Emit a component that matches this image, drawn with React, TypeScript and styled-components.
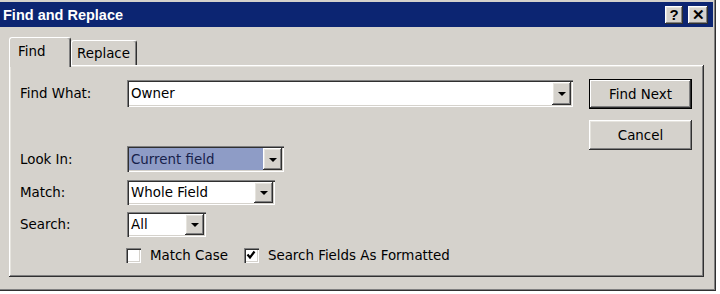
import styled, { createGlobalStyle } from "styled-components";

const GlobalStyle = createGlobalStyle`
  html, body {
    margin: 0;
    padding: 0;
    background: #fff;
  }
  body {
    font-family: "DejaVu Sans", Tahoma, sans-serif;
    font-size: 13.4px;
    color: #000;
  }
`;

const face = "#d5d2cc";

const raised = `
  background: ${face};
  box-shadow: inset -1px -1px 0 #303030, inset 1px 1px 0 #fff,
    inset -2px -2px 0 #808080, inset 2px 2px 0 #e6e4de;
`;

const sunken = `
  box-shadow: inset 1px 1px 0 #808080, inset 2px 2px 0 #303030,
    inset -1px -1px 0 #fff, inset -2px -2px 0 ${face};
`;

const Window = styled.div`
  width: 716px;
  height: 291px;
  box-sizing: border-box;
  background: ${face};
  padding: 2px 2px 0 0;
  border-right: 1px solid #303030;
  border-bottom: 1px solid #303030;
  box-shadow: inset -1px -1px 0 #808080;
  display: flex;
  flex-direction: column;
`;

const TitleBar = styled.div`
  height: 25px;
  background: #0c2572;
  display: flex;
  align-items: center;
  padding: 0 5px 0 3px;
  gap: 5px;
`;

const Title = styled.span`
  flex: 1;
  color: #fff;
  font-family: "Liberation Sans", Arial, sans-serif;
  font-weight: bold;
  font-size: 14.5px;
`;

const CaptionButton = styled.div<{ $w: number }>`
  ${raised}
  width: ${(p) => p.$w}px;
  height: 18px;
  display: flex;
  align-items: center;
  justify-content: center;
  font-family: "Liberation Sans", Arial, sans-serif;
  font-weight: bold;
  font-size: 15px;
  line-height: 1;
`;

const Body = styled.div`
  padding: 10px 0 0 9px;
  display: flex;
  flex-direction: column;
`;

const TabStrip = styled.div`
  display: flex;
  align-items: flex-end;
  height: 30px;
  margin-bottom: -2px;
`;

const Tab = styled.div<{ $active?: boolean; $w: number }>`
  position: relative;
  z-index: ${(p) => (p.$active ? 1 : 0)};
  width: ${(p) => p.$w}px;
  height: ${(p) => (p.$active ? 30 : 25)}px;
  margin-bottom: ${(p) => (p.$active ? 0 : 2)}px;
  box-sizing: border-box;
  background: ${face};
  border-radius: 3px 3px 0 0;
  border-top: 1px solid #fff;
  border-left: 1px solid #fff;
  border-right: 1px solid #303030;
  box-shadow: inset -1px 0 0 #808080;
  display: flex;
  align-items: ${(p) => (p.$active ? "flex-start" : "center")};
  padding: ${(p) => (p.$active ? "6px 0 0 8px" : "0 0 0 5px")};
`;

const Panel = styled.div`
  width: 695px;
  height: 212px;
  box-sizing: border-box;
  ${raised}
  padding: 15px 12px 0 11px;
  display: grid;
  grid-template-columns: 1fr 103px;
  column-gap: 16px;
  align-items: start;
`;

const Form = styled.div`
  display: flex;
  flex-direction: column;
`;

const Row = styled.div<{ $h: number; $mt?: number }>`
  display: flex;
  align-items: center;
  height: ${(p) => p.$h}px;
  margin-top: ${(p) => p.$mt ?? 0}px;
`;

const Label = styled.span`
  width: 107px;
  flex: none;
`;

const Combo = styled.div<{ $w?: number }>`
  ${sunken}
  background: #fff;
  box-sizing: border-box;
  height: 100%;
  width: ${(p) => (p.$w ? `${p.$w}px` : "auto")};
  flex: ${(p) => (p.$w ? "none" : 1)};
  padding: 2px;
  display: flex;
  align-items: stretch;
`;

const ComboText = styled.span<{ $selected?: boolean }>`
  flex: 1;
  display: flex;
  align-items: center;
  padding-left: 2px;
  background: ${(p) => (p.$selected ? "#8e9cc6" : "transparent")};
  color: ${(p) => (p.$selected ? "#17214a" : "#000")};
`;

const DropButton = styled.span`
  ${raised}
  width: 19px;
  flex: none;
  display: flex;
  align-items: center;
  justify-content: center;
`;

const Arrow = styled.span`
  width: 0;
  height: 0;
  border-left: 4px solid transparent;
  border-right: 4px solid transparent;
  border-top: 4px solid #000;
  margin-top: 1px;
`;

const Buttons = styled.div`
  display: flex;
  flex-direction: column;
  gap: 11px;
  margin-top: -1px;
`;

const Button = styled.div<{ $default?: boolean }>`
  ${raised}
  height: 30px;
  box-sizing: border-box;
  display: flex;
  align-items: center;
  justify-content: center;
  ${(p) =>
    p.$default &&
    `
    border: 1px solid #000;
    box-shadow: inset -1px -1px 0 #303030, inset 1px 1px 0 #fff,
      inset -2px -2px 0 #808080;
  `}
`;

const CheckRow = styled.div`
  display: flex;
  align-items: center;
  height: 16px;
  margin-top: 10px;
  padding-left: 106px;
`;

const CheckItem = styled.label`
  display: flex;
  align-items: center;
  gap: 9px;
  margin-right: 16px;
`;

const Box = styled.span`
  ${sunken}
  background: #fff;
  width: 15px;
  height: 15px;
  display: flex;
  align-items: center;
  justify-content: center;
`;

const Dropdown = ({ text, width, selected }: { text: string; width?: number; selected?: boolean }) => (
  <Combo $w={width}>
    <ComboText $selected={selected}>{text}</ComboText>
    <DropButton>
      <Arrow />
    </DropButton>
  </Combo>
);

const Check = ({ text, checked }: { text: string; checked?: boolean }) => (
  <CheckItem>
    <Box>
      {checked && (
        <svg width="10" height="10" viewBox="0 0 10 10">
          <path d="M1.5 4.5 L4 7.5 L8.5 1.5" stroke="#000" strokeWidth="2.2" fill="none" />
        </svg>
      )}
    </Box>
    {text}
  </CheckItem>
);

export default function App() {
  return (
    <>
      <GlobalStyle />
      <Window>
        <TitleBar>
          <Title>Find and Replace</Title>
          <CaptionButton $w={18}>?</CaptionButton>
          <CaptionButton $w={20}>✕</CaptionButton>
        </TitleBar>
        <Body>
          <TabStrip>
            <Tab $active $w={62}>Find</Tab>
            <Tab $w={66}>Replace</Tab>
          </TabStrip>
          <Panel>
            <Form>
              <Row $h={27}>
                <Label>Find What:</Label>
                <Dropdown text="Owner" />
              </Row>
              <Row $h={26} $mt={39}>
                <Label>Look In:</Label>
                <Dropdown text="Current field" width={157} selected />
              </Row>
              <Row $h={25} $mt={8}>
                <Label>Match:</Label>
                <Dropdown text="Whole Field" width={148} />
              </Row>
              <Row $h={25} $mt={7}>
                <Label>Search:</Label>
                <Dropdown text="All" width={79} />
              </Row>
              <CheckRow>
                <Check text="Match Case" />
                <Check text="Search Fields As Formatted" checked />
              </CheckRow>
            </Form>
            <Buttons>
              <Button $default>Find Next</Button>
              <Button>Cancel</Button>
            </Buttons>
          </Panel>
        </Body>
      </Window>
    </>
  );
}
